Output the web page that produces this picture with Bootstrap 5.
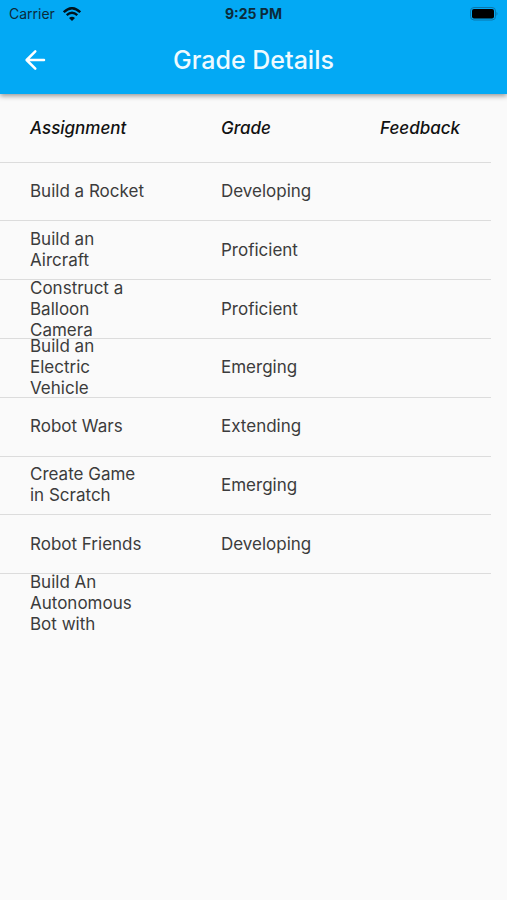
<!DOCTYPE html>
<html lang="en">
<head>
<meta charset="utf-8">
<meta name="viewport" content="width=device-width, initial-scale=1">
<title>Grade Details</title>
<link href="https://cdn.jsdelivr.net/npm/bootstrap@5.3.0/dist/css/bootstrap.min.css" rel="stylesheet">
<style>
body{background:#fafafa;color:#3c3c3c;font-family:Inter,"Liberation Sans",sans-serif;font-size:17px;line-height:21px}
.app-head{background:#03a9f4;box-shadow:0 2px 5px rgba(0,0,0,.4)}
.status{height:27px;padding:0 9px;font-size:14px;color:#0b2b3b}
.status .clock{font-weight:700}
.status>*{flex:1 1 0}
.bar{height:67px;padding:0 20px 2px}
.bar>*{flex:1 1 0}
.bar h1{font-size:25px;line-height:30px;font-weight:500;color:#effaff;white-space:nowrap;flex:0 0 auto}
.back{color:#fff;line-height:0}
.grades{width:calc(100% - 16px);height:538px;table-layout:fixed}
.grades td,.grades th{padding:0 0 0 30px;vertical-align:middle}
.grades th{height:68px;padding-top:2px;font-weight:500;font-style:italic;color:#111}
.grades tbody td{border-top:1px solid #dcdcdc}
.c1{width:191px}.c2{width:159px}
.task{height:57px;width:120px}
.task span{margin:-3px 0}
</style>
</head>
<body>
<header class="app-head position-relative">
<div class="status d-flex align-items-center">
<div class="d-flex align-items-center gap-2"><span>Carrier</span>
<svg width="18" height="14" viewBox="0 0 18 14" aria-hidden="true"><g fill="none" stroke="#00131c" stroke-width="2.300"><path d="M.8 5.200Q9-2.800 17.200 5.200"/><path d="M3.700 8.200Q9 3.300 14.300 8.200"/></g><path fill="#00131c" d="M9 14 6 10.900Q9 8.400 12 10.900Z"/></svg></div>
<div class="clock text-center">9:25 PM</div>
<div class="text-end lh-1"><svg class="d-block ms-auto" width="28" height="14" viewBox="0 0 28 14" aria-hidden="true"><rect x=".5" y=".5" width="25" height="12.500" rx="3.500" fill="none" stroke="#0b77ab"/><rect x="2" y="2" width="22" height="9.500" rx="2"/><path d="M26.500 4.800Q28.500 6.800 26.500 8.800Z" fill="#0b77ab"/></svg></div>
</div>
<div class="bar d-flex align-items-center">
<div><button type="button" class="back btn p-1 border-0" aria-label="Back"><svg width="22" height="22" viewBox="0 0 22 22" fill="none" stroke="currentColor" stroke-width="2.500" stroke-linecap="round" stroke-linejoin="round"><path d="M20 11H3M11.300 2.300 2.600 11l8.700 8.700"/></svg></button></div>
<h1 class="m-0">Grade Details</h1>
<div></div>
</div>
</header>
<main>
<table class="grades">
<colgroup><col class="c1"><col class="c2"><col></colgroup>
<thead><tr><th scope="col">Assignment</th><th scope="col">Grade</th><th scope="col">Feedback</th></tr></thead>
<tbody>
<tr><td><div class="task d-flex align-items-center"><span>Build a Rocket</span></div></td><td>Developing</td><td></td></tr>
<tr><td><div class="task d-flex align-items-center"><span>Build an Aircraft</span></div></td><td>Proficient</td><td></td></tr>
<tr><td><div class="task d-flex align-items-center"><span>Construct a Balloon Camera</span></div></td><td>Proficient</td><td></td></tr>
<tr><td><div class="task d-flex align-items-center"><span>Build an Electric Vehicle</span></div></td><td>Emerging</td><td></td></tr>
<tr><td><div class="task d-flex align-items-center"><span>Robot Wars</span></div></td><td>Extending</td><td></td></tr>
<tr><td><div class="task d-flex align-items-center"><span>Create Game in Scratch</span></div></td><td>Emerging</td><td></td></tr>
<tr><td><div class="task d-flex align-items-center"><span>Robot Friends</span></div></td><td>Developing</td><td></td></tr>
<tr><td><div class="task d-flex align-items-center"><span>Build An Autonomous Bot with</span></div></td><td></td><td></td></tr>
</tbody>
</table>
</main>
<script src="https://cdn.jsdelivr.net/npm/bootstrap@5.3.0/dist/js/bootstrap.bundle.min.js"></script>
</body>
</html>
